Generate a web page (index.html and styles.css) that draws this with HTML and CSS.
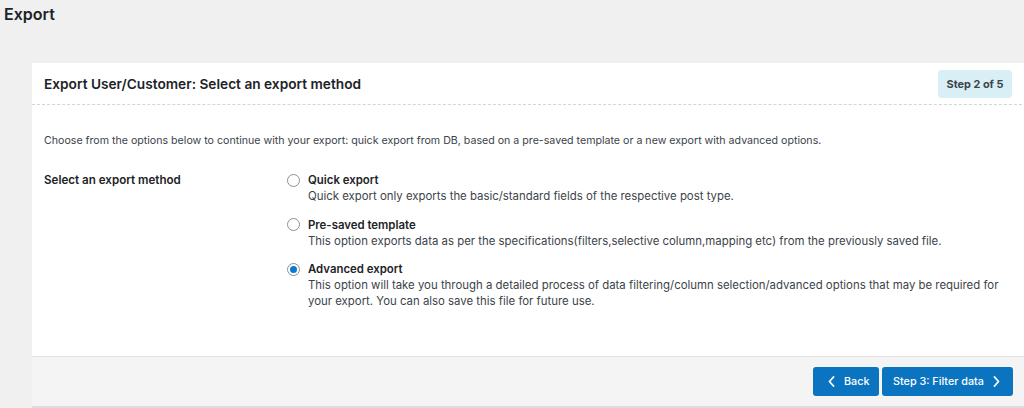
FILE: index.html
```html
<!DOCTYPE html>
<html>
<head>
<meta charset="utf-8">
<link rel="stylesheet" href="styles.css">
</head>
<body>
<h1 class="page-title">Export</h1>
<div class="card">
  <div class="card-header">
    <h2 class="card-title">Export User/Customer: Select an export method</h2>
    <span class="step-badge">Step 2 of 5</span>
  </div>
  <div class="card-body">
    <p class="intro">Choose from the options below to continue with your export: quick export from DB, based on a pre-saved template or a new export with advanced options.</p>
    <div class="method-row">
      <div class="method-label">Select an export method</div>
      <div class="options">
        <label class="option">
          <span class="radio"></span>
          <span class="option-text">
            <span class="option-title">Quick export</span>
            <span class="option-desc">Quick export only exports the basic/standard fields of the respective post type.</span>
          </span>
        </label>
        <label class="option">
          <span class="radio"></span>
          <span class="option-text">
            <span class="option-title">Pre-saved template</span>
            <span class="option-desc">This option exports data as per the specifications(filters,selective column,mapping etc) from the previously saved file.</span>
          </span>
        </label>
        <label class="option">
          <span class="radio checked"></span>
          <span class="option-text">
            <span class="option-title">Advanced export</span>
            <span class="option-desc">This option will take you through a detailed process of data filtering/column selection/advanced options that may be required for your export. You can also save this file for future use.</span>
          </span>
        </label>
      </div>
    </div>
  </div>
  <div class="card-footer">
    <button class="btn btn-back">
      <svg class="chev" width="7" height="11" viewBox="0 0 7 11"><path d="M5.5 1 1.5 5.5l4 4.5" fill="none" stroke="#fff" stroke-width="1.8" stroke-linecap="round" stroke-linejoin="round"/></svg>
      <span>Back</span>
    </button>
    <button class="btn btn-next">
      <span>Step 3: Filter data</span>
      <svg class="chev" width="7" height="11" viewBox="0 0 7 11"><path d="M1.5 1l4 4.5-4 4.5" fill="none" stroke="#fff" stroke-width="1.8" stroke-linecap="round" stroke-linejoin="round"/></svg>
    </button>
  </div>
</div>
</body>
</html>
```

FILE: styles.css
```css
* { box-sizing: border-box; }
html, body { margin: 0; padding: 0; }
body {
  background: #f0f0f1;
  font-family: Inter, "Liberation Sans", Arial, sans-serif;
  color: #3c434a;
  font-size: 11.4px;
  width: 1024px;
  height: 408px;
  overflow: hidden;
}
.page-title {
  margin: 0;
  padding: 4px 0 0 4px;
  font-size: 16px;
  font-weight: 600;
  line-height: 20px;
  color: #1d2327;
}
.card {
  margin: 39px 0 0 32px;
  width: 1000px;
  background: #fff;
  box-shadow: 0 2px 0 #dcdcde;
}
.card-header {
  height: 42px;
  display: flex;
  align-items: center;
  justify-content: space-between;
  padding: 0 20px 0 12px;
  border-bottom: 1px dashed #d5d5d5;
}
.card-title {
  margin: 0;
  font-size: 13.7px;
  font-weight: 600;
  color: #1d2327;
}
.step-badge {
  background: #d9eff6;
  color: #3c434a;
  font-size: 10.9px;
  font-weight: 700;
  height: 28px;
  width: 74px;
  display: flex;
  align-items: center;
  justify-content: center;
  border-radius: 4px;
}
.card-body {
  padding: 28px 12px 0 12px;
  height: 251px;
}
.intro {
  margin: 0 0 23px 0;
  font-size: 10.64px;
  line-height: 16px;
}
.method-row {
  display: grid;
  grid-template-columns: 243px 1fr;
}
.method-label {
  font-size: 11.6px;
  font-weight: 600;
  color: #1d2327;
  line-height: 16px;
}
.options {
  display: flex;
  flex-direction: column;
  gap: 12.5px;
}
.option {
  display: flex;
  gap: 8px;
  line-height: 16px;
}
.radio {
  flex: none;
  width: 13px;
  height: 13px;
  margin-top: 1.5px;
  border: 1px solid #8c8f94;
  border-radius: 50%;
  background: #fff;
  display: flex;
  align-items: center;
  justify-content: center;
}
.radio.checked::after {
  content: "";
  width: 7px;
  height: 7px;
  border-radius: 50%;
  background: #0a7ad0;
}
.option-text {
  display: flex;
  flex-direction: column;
  width: 704px;
}
.option-title {
  font-weight: 600;
  color: #1d2327;
}
.card-footer {
  height: 50px;
  background: #f4f4f4;
  border-top: 1px solid #e2e2e2;
  display: flex;
  align-items: center;
  gap: 3px;
  padding-left: 781px;
}
.btn {
  height: 29px;
  background: #0b74c0;
  color: #fff;
  border: none;
  border-radius: 3px;
  font-family: inherit;
  font-size: 10.8px;
  font-weight: 500;
  display: flex;
  align-items: center;
  gap: 9px;
  white-space: nowrap;
}
.btn-back {
  width: 66px;
  padding: 0 0 0 15px;
}
.btn-next {
  width: 131px;
  padding: 0 0 0 11px;
}
```
